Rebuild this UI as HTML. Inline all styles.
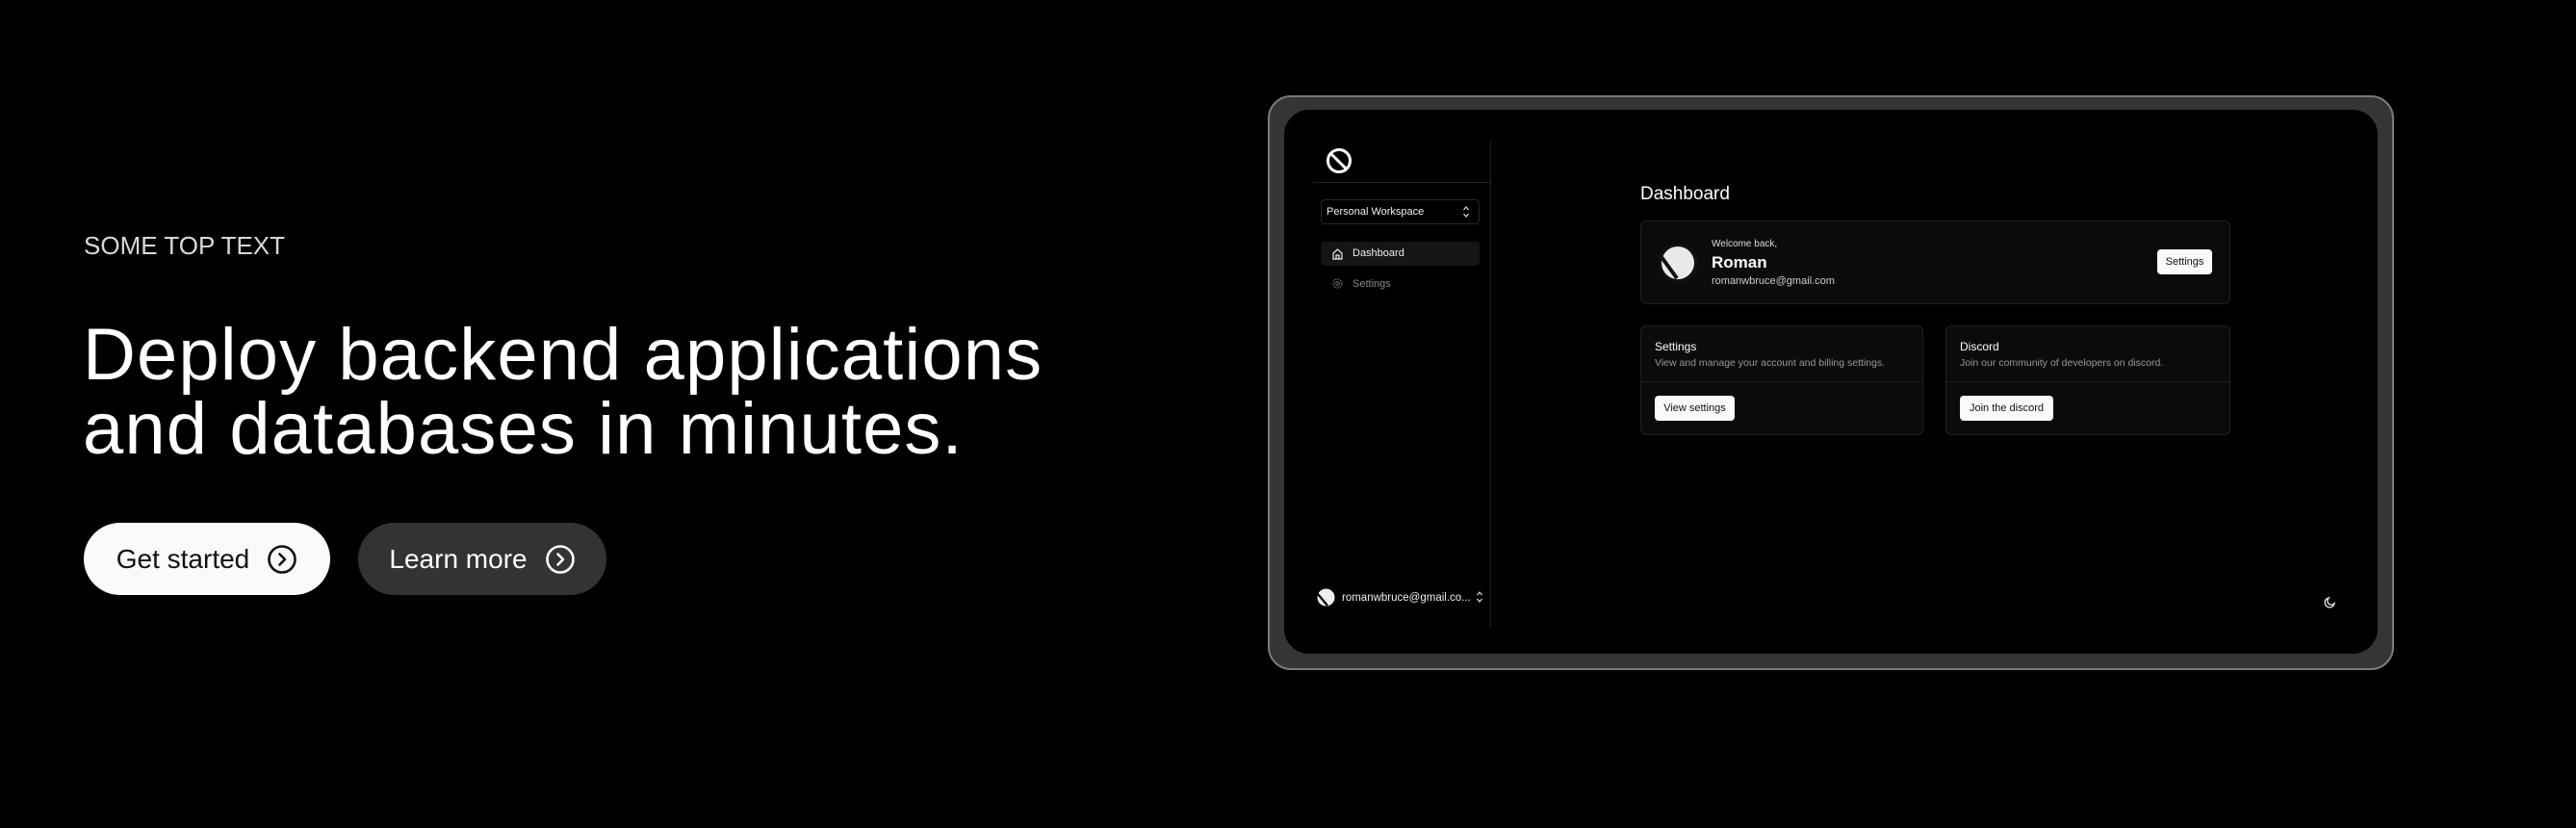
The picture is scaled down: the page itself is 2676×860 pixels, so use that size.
<!DOCTYPE html>
<html><head><meta charset="utf-8"><style>
*{margin:0;padding:0;box-sizing:border-box}
body{width:2676px;height:860px;background:#000;position:relative;overflow:hidden;font-family:"Liberation Sans",sans-serif;color:#fff}
.a{position:absolute}
.top{left:87px;top:240px;font-size:26px;color:#d8d8d8;letter-spacing:0px}
h1{position:absolute;left:86px;top:330px;font-size:76px;font-weight:normal;line-height:77px;letter-spacing:1.1px;color:#fff}
.btn{position:absolute;top:543px;height:75px;border-radius:38px;display:flex;align-items:center;justify-content:center;gap:18px;font-size:28px;letter-spacing:0px}
.frame{left:1317px;top:99px;width:1170px;height:597px;border-radius:24px;background:#353535;border:2px solid #7a7a7a}
.screen{left:1334px;top:114px;width:1136px;height:565px;border-radius:26px;background:#000}
.t{position:absolute;white-space:nowrap}
.card{position:absolute;background:#0b0b0c;border:1px solid #1f1f22;border-radius:6px}
.wb{position:absolute;background:#fafafa;color:#111;border-radius:4px;font-size:11px;display:flex;align-items:center;justify-content:center}
</style></head><body>
<div class="a top">SOME TOP TEXT</div>
<h1>Deploy backend applications<br>and databases in minutes.</h1>
<div class="btn" style="left:87px;width:256px;background:#fafafa;color:#111">Get started
<svg width="32" height="32" viewBox="0 0 32 32"><circle cx="16" cy="16" r="13.5" fill="none" stroke="#111" stroke-width="2.6"/><path d="M13.5 10.5l5.5 5.5-5.5 5.5" fill="none" stroke="#111" stroke-width="2.6" stroke-linecap="round" stroke-linejoin="round"/></svg></div>
<div class="btn" style="left:372px;width:258px;background:#333;color:#fff">Learn more
<svg width="32" height="32" viewBox="0 0 32 32"><circle cx="16" cy="16" r="13.5" fill="none" stroke="#fff" stroke-width="2.6"/><path d="M13.5 10.5l5.5 5.5-5.5 5.5" fill="none" stroke="#fff" stroke-width="2.6" stroke-linecap="round" stroke-linejoin="round"/></svg></div>

<div class="a frame"></div>
<div class="a screen"></div>
<svg class="a" style="left:1377px;top:153px" width="28" height="28" viewBox="0 0 28 28"><circle cx="14" cy="14" r="11.5" fill="none" stroke="#fff" stroke-width="3"/><path d="M6 7l15 15" stroke="#fff" stroke-width="3"/></svg>
<div class="a" style="left:1364px;top:189px;width:185px;height:1px;background:#222"></div>
<div class="a" style="left:1548px;top:146px;width:1px;height:505px;background:#1e1e1e"></div>
<div class="a" style="left:1372px;top:207px;width:165px;height:26px;border:1px solid #27272a;border-radius:4px"></div>
<div class="t" style="left:1378px;top:214px;font-size:11px;color:#eee">Personal Workspace</div>
<svg class="a" style="left:1519px;top:213px" width="8" height="14" viewBox="0 0 8 14"><path d="M1.5 5l2.5-3 2.5 3M1.5 9l2.5 3 2.5-3" fill="none" stroke="#ddd" stroke-width="1.2"/></svg>
<div class="a" style="left:1372px;top:251px;width:165px;height:25px;background:#151517;border-radius:4px"></div>
<svg class="a" style="left:1383px;top:257px" width="13" height="13" viewBox="0 0 13 13"><path d="M2 6l4.5-4 4.5 4v6H2zM5 12V8h3v4" fill="none" stroke="#eee" stroke-width="1.2"/></svg>
<div class="t" style="left:1405px;top:257px;font-size:11px;color:#eee">Dashboard</div>
<svg class="a" style="left:1383px;top:288px" width="13" height="13" viewBox="0 0 13 13"><circle cx="6.5" cy="6.5" r="4.5" fill="none" stroke="#777" stroke-width="1.1" stroke-dasharray="2 1"/><circle cx="6.5" cy="6.5" r="1.8" fill="none" stroke="#777" stroke-width="1"/></svg>
<div class="t" style="left:1405px;top:289px;font-size:11px;color:#888">Settings</div>
<svg class="a" style="left:1368px;top:611px" width="19" height="19" viewBox="0 0 19 19"><circle cx="9.5" cy="9.5" r="9" fill="#eee"/><path d="M1 6l10 12" stroke="#000" stroke-width="2.2"/></svg>
<div class="t" style="left:1394px;top:615px;font-size:11.5px;color:#eee">romanwbruce@gmail.co...</div>
<svg class="a" style="left:1533px;top:613px" width="8" height="14" viewBox="0 0 8 14"><path d="M1.5 5l2.5-3 2.5 3M1.5 9l2.5 3 2.5-3" fill="none" stroke="#ddd" stroke-width="1.2"/></svg>
<svg class="a" style="left:2413px;top:619px" width="14" height="14" viewBox="0 0 14 14"><path d="M6 2a5 5 0 1 0 6 6A4 4 0 0 1 6 2z" fill="none" stroke="#eee" stroke-width="1.3"/></svg>
<div class="t" style="left:1704px;top:191px;font-size:19px;color:#fff">Dashboard</div>
<div class="card" style="left:1704px;top:229px;width:613px;height:87px"></div>
<svg class="a" style="left:1721px;top:251px" width="44" height="44" viewBox="0 0 44 44"><circle cx="22" cy="22" r="21" fill="#111"/><circle cx="22" cy="22" r="17" fill="#eaeaea"/><path d="M5 16l16 22" stroke="#111" stroke-width="4"/></svg>
<div class="t" style="left:1778px;top:248px;font-size:10px;color:#ddd">Welcome back,</div>
<div class="t" style="left:1778px;top:263px;font-size:17px;font-weight:bold;color:#fff">Roman</div>
<div class="t" style="left:1778px;top:286px;font-size:11px;color:#ccc">romanwbruce@gmail.com</div>
<div class="wb" style="left:2241px;top:259px;width:57px;height:26px">Settings</div>
<div class="card" style="left:1704px;top:338px;width:294px;height:114px"></div>
<div class="a" style="left:1705px;top:396px;width:292px;height:1px;background:#1f1f22"></div>
<div class="t" style="left:1719px;top:353px;font-size:12px;color:#fff">Settings</div>
<div class="t" style="left:1719px;top:371px;font-size:10.5px;color:#999">View and manage your account and billing settings.</div>
<div class="wb" style="left:1719px;top:411px;width:83px;height:26px">View settings</div>
<div class="card" style="left:2021px;top:338px;width:296px;height:114px"></div>
<div class="a" style="left:2022px;top:396px;width:294px;height:1px;background:#1f1f22"></div>
<div class="t" style="left:2036px;top:353px;font-size:12px;color:#fff">Discord</div>
<div class="t" style="left:2036px;top:371px;font-size:10.5px;color:#999">Join our community of developers on discord.</div>
<div class="wb" style="left:2036px;top:411px;width:97px;height:26px">Join the discord</div>
</body></html>
